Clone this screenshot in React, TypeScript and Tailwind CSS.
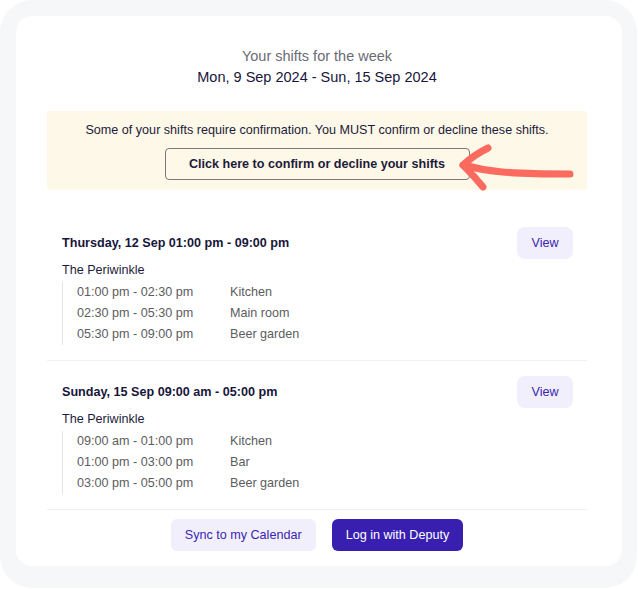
const shifts = [
  {
    title: "Thursday, 12 Sep 01:00 pm - 09:00 pm",
    place: "The Periwinkle",
    rows: [
      ["01:00 pm - 02:30 pm", "Kitchen"],
      ["02:30 pm - 05:30 pm", "Main room"],
      ["05:30 pm - 09:00 pm", "Beer garden"],
    ],
  },
  {
    title: "Sunday, 15 Sep 09:00 am - 05:00 pm",
    place: "The Periwinkle",
    rows: [
      ["09:00 am - 01:00 pm", "Kitchen"],
      ["01:00 pm - 03:00 pm", "Bar"],
      ["03:00 pm - 05:00 pm", "Beer garden"],
    ],
  },
];

function Arrow() {
  return (
    <svg
      className="absolute left-[408px] top-[29px]"
      width={125}
      height={55}
      viewBox="0 0 125 55"
      fill="none"
      stroke="#fb6a5e"
      strokeWidth={7}
      strokeLinecap="round"
      strokeLinejoin="round"
    >
      <path d="M33 8 Q19 15 8 25 Q19 36 28 47" />
      <path d="M8 25 C30 31 50 34 115 34" />
    </svg>
  );
}

export default function App() {
  return (
    <div className="w-[637px] h-[588px] rounded-[32px] bg-[#f6f7f9] pt-4 pl-4 pr-[15px] font-['Liberation_Sans',Arial,sans-serif]">
      <div className="bg-white rounded-[16px] h-[550px] pl-[31px] pr-[35px] pt-[30px] pb-[15px]">
        {/* Header */}
        <div className="text-center">
          <div className="text-[14.5px] leading-5 text-[#6b6b73]">Your shifts for the week</div>
          <div className="text-[14.5px] leading-5 mt-px text-[#17163a]">
            Mon, 9 Sep 2024 - Sun, 15 Sep 2024
          </div>
        </div>

        {/* Confirmation banner */}
        <div className="relative mt-6 mb-[22px] bg-[#fef8e8] rounded-[3px] pt-[10px] pb-[10px] flex flex-col items-center">
          <p className="text-[12.6px] leading-[18px] text-[#1c1b3a]">
            Some of your shifts require confirmation. You MUST confirm or decline these shifts.
          </p>
          <button className="mt-[9px] h-8 w-[305px] border border-[#7a7a7a] rounded-[4px] text-[12.6px] font-bold text-[#1c1b3a]">
            Click here to confirm or decline your shifts
          </button>
          <Arrow />
        </div>

        {/* Shifts */}
        {shifts.map((s) => (
          <div key={s.title} className="pl-[15px] pr-[14px] pt-[15px] pb-[15px] border-b border-[#efeff2]">
            <div className="flex items-center justify-between h-8">
              <div className="text-[12.6px] font-bold text-[#17163a]">{s.title}</div>
              <button className="h-8 w-[56px] rounded-[8px] bg-[#f1effb] text-[12.6px] text-[#3b25b2]">
                View
              </button>
            </div>
            <div className="mt-[2px] text-[12.6px] leading-[18px] text-[#1c1b3a]">{s.place}</div>
            <div className="mt-[3px] border-l border-[#e6e6e9] pl-[14px]">
              {s.rows.map(([time, loc]) => (
                <div key={time} className="flex text-[12.6px] leading-[21px] text-[#5c5c60]">
                  <span className="w-[153px]">{time}</span>
                  <span>{loc}</span>
                </div>
              ))}
            </div>
          </div>
        ))}

        {/* Actions */}
        <div className="mt-[9px] flex justify-center gap-4">
          <button className="h-8 px-[14px] rounded-[6px] bg-[#f1effb] text-[12.6px] text-[#3b25b2]">
            Sync to my Calendar
          </button>
          <button className="h-8 px-[14px] rounded-[6px] bg-[#391fb0] text-[12.6px] text-white">
            Log in with Deputy
          </button>
        </div>
      </div>
    </div>
  );
}
